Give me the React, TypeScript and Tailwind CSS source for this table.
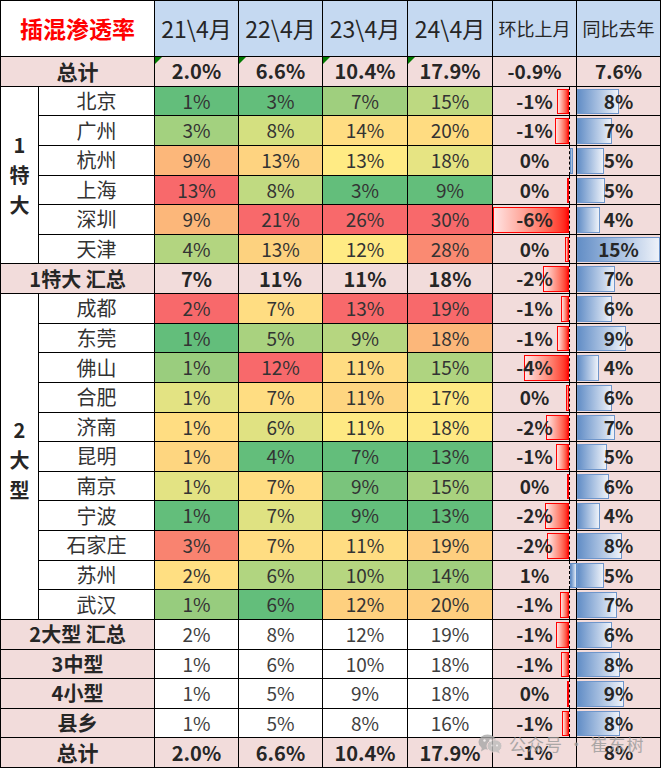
import React from "react";

type R = {
  name: string;
  v: string[];
  c?: string[];
  mom: string;
  yoy: string;
  mb: number;
  yb: number;
};

const r1: R[] = [
  { name: "北京", v: ["1%", "3%", "7%", "15%"], c: ["#63be7b", "#63be7b", "#9fcf7e", "#bdd981"], mom: "-1%", yoy: "8%", mb: -12, yb: 42 },
  { name: "广州", v: ["3%", "8%", "14%", "20%"], c: ["#a3d17f", "#d4e080", "#ffdd82", "#ffdc81"], mom: "-1%", yoy: "7%", mb: -14, yb: 35 },
  { name: "杭州", v: ["9%", "13%", "13%", "18%"], c: ["#fcb77a", "#fed380", "#ffeb84", "#e6e483"], mom: "0%", yoy: "5%", mb: 3, yb: 27 },
  { name: "上海", v: ["13%", "8%", "3%", "9%"], c: ["#f8696b", "#c0da81", "#63be7b", "#63be7b"], mom: "0%", yoy: "5%", mb: -2, yb: 28 },
  { name: "深圳", v: ["9%", "21%", "26%", "30%"], c: ["#fcb77a", "#f8696b", "#f8696b", "#f8696b"], mom: "-6%", yoy: "4%", mb: -76, yb: 23 },
  { name: "天津", v: ["4%", "13%", "12%", "28%"], c: ["#b3d580", "#fdd27f", "#ffeb84", "#fa8a72"], mom: "0%", yoy: "15%", mb: -4, yb: 83 },
];

const r2: R[] = [
  { name: "成都", v: ["2%", "7%", "13%", "19%"], c: ["#f8696b", "#ffdd82", "#f8696b", "#f8696b"], mom: "-1%", yoy: "6%", mb: -8, yb: 35 },
  { name: "东莞", v: ["1%", "5%", "9%", "18%"], c: ["#63be7b", "#a9d27f", "#b6d680", "#fcb77a"], mom: "-1%", yoy: "9%", mb: -12, yb: 49 },
  { name: "佛山", v: ["1%", "12%", "11%", "15%"], c: ["#9acd7e", "#f8696b", "#ffdc81", "#afd480"], mom: "-4%", yoy: "4%", mb: -45, yb: 22 },
  { name: "合肥", v: ["1%", "7%", "11%", "17%"], c: ["#e3e383", "#ffdd82", "#fed580", "#fee983"], mom: "0%", yoy: "6%", mb: -3, yb: 35 },
  { name: "济南", v: ["1%", "6%", "11%", "18%"], c: ["#ffdd82", "#e0e282", "#fee983", "#fee983"], mom: "-2%", yoy: "7%", mb: -23, yb: 38 },
  { name: "昆明", v: ["1%", "4%", "7%", "13%"], c: ["#fed680", "#63be7b", "#63be7b", "#63be7b"], mom: "-1%", yoy: "5%", mb: -13, yb: 30 },
  { name: "南京", v: ["1%", "7%", "9%", "15%"], c: ["#e3e383", "#ffdd82", "#7ac47c", "#a9d27f"], mom: "0%", yoy: "6%", mb: -2, yb: 32 },
  { name: "宁波", v: ["1%", "7%", "9%", "13%"], c: ["#63be7b", "#dfe282", "#63be7b", "#63be7b"], mom: "-2%", yoy: "4%", mb: -24, yb: 23 },
  { name: "石家庄", v: ["3%", "7%", "11%", "19%"], c: ["#f98370", "#ffdd82", "#ffdd82", "#fece7f"], mom: "-2%", yoy: "8%", mb: -22, yb: 45 },
  { name: "苏州", v: ["2%", "6%", "10%", "14%"], c: ["#ffdf82", "#b1d580", "#b6d680", "#a0cf7e"], mom: "1%", yoy: "5%", mb: 7, yb: 27 },
  { name: "武汉", v: ["1%", "6%", "12%", "20%"], c: ["#97cc7e", "#63be7b", "#fed07f", "#fece7f"], mom: "-1%", yoy: "7%", mb: -9, yb: 40 },
];

const sums: R[] = [
  { name: "2大型 汇总", v: ["2%", "8%", "12%", "19%"], mom: "-1%", yoy: "6%", mb: -13, yb: 35 },
  { name: "3中型", v: ["1%", "6%", "10%", "18%"], mom: "-1%", yoy: "8%", mb: -8, yb: 43 },
  { name: "4小型", v: ["1%", "5%", "9%", "18%"], mom: "0%", yoy: "9%", mb: -2, yb: 47 },
  { name: "县乡", v: ["1%", "5%", "8%", "16%"], mom: "-1%", yoy: "8%", mb: -7, yb: 43 },
];

const cell = "border-r border-b border-black flex items-center justify-center relative";

function Mom({ text, bar, bold }: { text: string; bar?: number; bold?: boolean }) {
  return (
    <div className={`${cell} bg-[#f2dcdb] text-[19px] font-bold text-[#262626]`}>
      {bar !== undefined && (
        <>
          {bar < 0 ? (
            <div
              className="absolute top-[2px] bottom-[1px] right-[7px] border border-[#ff0000] bg-gradient-to-l from-[#ff0000] to-[#ffe4e4]"
              style={{ width: -bar }}
            />
          ) : (
            <div
              className="absolute top-[2px] bottom-[1px] left-[77px] border border-[#638ec6] bg-gradient-to-r from-[#638ec6] to-[#e6edf7]"
              style={{ width: bar }}
            />
          )}
          <div className="absolute top-0 bottom-0 left-[76px] border-l border-dashed border-black" />
        </>
      )}
      <span className={`relative ${bold ? "" : ""}`}>{text}</span>
    </div>
  );
}

function Yoy({ text, bar }: { text: string; bar?: number }) {
  return (
    <div className={`${cell} bg-[#f2dcdb] text-[19px] font-bold text-[#262626]`}>
      {bar !== undefined && (
        <div
          className="absolute top-[2px] bottom-[1px] left-0 border border-[#6f96cb] bg-gradient-to-r from-[#638ec6] to-[#eef2f9]"
          style={{ width: bar }}
        />
      )}
      <span className="relative">{text}</span>
    </div>
  );
}

function Tri() {
  return (
    <div className="absolute left-0 top-0 w-0 h-0 border-t-[7px] border-t-[#007a00] border-r-[7px] border-r-transparent" />
  );
}

function CityRow({ r }: { r: R }) {
  return (
    <>
      <div className={`${cell} bg-white text-[20px] text-[#333]`}>{r.name}</div>
      {r.v.map((x, i) => (
        <div key={i} className={`${cell} text-[19px] text-[#333]`} style={{ background: r.c![i] }}>
          {x}
        </div>
      ))}
      <Mom text={r.mom} bar={r.mb} />
      <Yoy text={r.yoy} bar={r.yb} />
    </>
  );
}

function SumRow({ r }: { r: R }) {
  return (
    <>
      <div className={`${cell} col-span-2 bg-[#f2dcdb] text-[20px] font-bold text-[#262626]`}>{r.name}</div>
      {r.v.map((x, i) => (
        <div key={i} className={`${cell} bg-white text-[19px] text-[#404040]`}>
          {x}
        </div>
      ))}
      <Mom text={r.mom} bar={r.mb} />
      <Yoy text={r.yoy} bar={r.yb} />
    </>
  );
}

export default function App() {
  const font = { fontFamily: '"Noto Sans CJK SC", "Liberation Sans", sans-serif' };
  return (
    <div className="relative w-[661px] h-[768px] bg-white overflow-hidden" style={font}>
      <div className="grid h-[768px] border-l border-t border-black grid-cols-[38px_116px_84px_84px_85px_85px_84px_84px] grid-rows-[56px_repeat(24,minmax(0,1fr))]">
        {/* header */}
        <div className={`${cell} col-span-2 bg-white text-[23px] font-bold text-[#ff0000]`}>插混渗透率</div>
        {["21\\4月", "22\\4月", "23\\4月", "24\\4月"].map((h) => (
          <div key={h} className={`${cell} bg-[#c5d9f1] text-[23px] text-[#262626]`}>
            {h}
          </div>
        ))}
        <div className={`${cell} bg-[#c5d9f1] text-[18px] text-[#262626]`}>环比上月</div>
        <div className={`${cell} bg-[#c5d9f1] text-[18px] text-[#262626]`}>同比去年</div>

        {/* total */}
        <div className={`${cell} col-span-2 bg-[#f2dcdb] text-[21px] font-bold text-[#262626]`}>总计</div>
        {["2.0%", "6.6%", "10.4%", "17.9%"].map((x) => (
          <div key={x} className={`${cell} bg-[#f2dcdb] text-[20px] font-bold text-[#262626]`}>
            <Tri />
            {x}
          </div>
        ))}
        <Mom text="-0.9%" />
        <Yoy text="7.6%" />

        {/* region 1 */}
        <div className={`${cell} row-span-6 flex-col bg-white text-[20px] font-bold text-[#262626] leading-[30px]`}>
          <span>1</span>
          <span>特</span>
          <span>大</span>
        </div>
        {r1.map((r) => (
          <CityRow key={r.name} r={r} />
        ))}

        {/* 1特大 汇总 */}
        <div className={`${cell} col-span-2 bg-[#f2dcdb] text-[20px] font-bold text-[#262626]`}>1特大 汇总</div>
        {["7%", "11%", "11%", "18%"].map((x, i) => (
          <div key={i} className={`${cell} bg-[#f2dcdb] text-[20px] font-bold text-[#262626]`}>
            {x}
          </div>
        ))}
        <Mom text="-2%" bar={-26} />
        <Yoy text="7%" bar={38} />

        {/* region 2 */}
        <div className={`${cell} row-span-11 flex-col bg-white text-[20px] font-bold text-[#262626] leading-[30px] pt-[8px]`}>
          <span>2</span>
          <span>大</span>
          <span>型</span>
        </div>
        {r2.map((r) => (
          <CityRow key={r.name} r={r} />
        ))}

        {sums.map((r) => (
          <SumRow key={r.name} r={r} />
        ))}

        {/* final total */}
        <div className={`${cell} col-span-2 bg-[#f2dcdb] text-[21px] font-bold text-[#262626]`}>总计</div>
        {["2.0%", "6.6%", "10.4%", "17.9%"].map((x) => (
          <div key={x} className={`${cell} bg-[#f2dcdb] text-[20px] font-bold text-[#262626]`}>
            {x}
          </div>
        ))}
        <Mom text="-1%" />
        <Yoy text="8%" />
      </div>

      {/* watermark */}
      <div className="absolute left-[478px] top-[731px] flex items-center gap-[6px] text-[17px] text-[#9a9a9a] opacity-80 pointer-events-none">
        <svg width="25" height="20" viewBox="0 0 25 20">
          <ellipse cx="9.5" cy="8" rx="9" ry="7.5" fill="#a8a8a8" />
          <path d="M4 13 L3 17.5 L8 14.5 Z" fill="#a8a8a8" />
          <ellipse cx="16.5" cy="12" rx="7.5" ry="6.3" fill="#bdbdbd" stroke="#f2dcdb" strokeWidth="1" />
          <path d="M20.5 16.5 L22 19.5 L17.5 17.5 Z" fill="#bdbdbd" />
          <circle cx="6.5" cy="6.5" r="1.2" fill="#f2f2f2" />
          <circle cx="12.5" cy="6.5" r="1.2" fill="#f2f2f2" />
          <circle cx="14.3" cy="11.5" r="1" fill="#f2f2f2" />
          <circle cx="19" cy="11.5" r="1" fill="#f2f2f2" />
        </svg>
        <span className="tracking-[1px]">公众号 · 崔东树</span>
      </div>
    </div>
  );
}
